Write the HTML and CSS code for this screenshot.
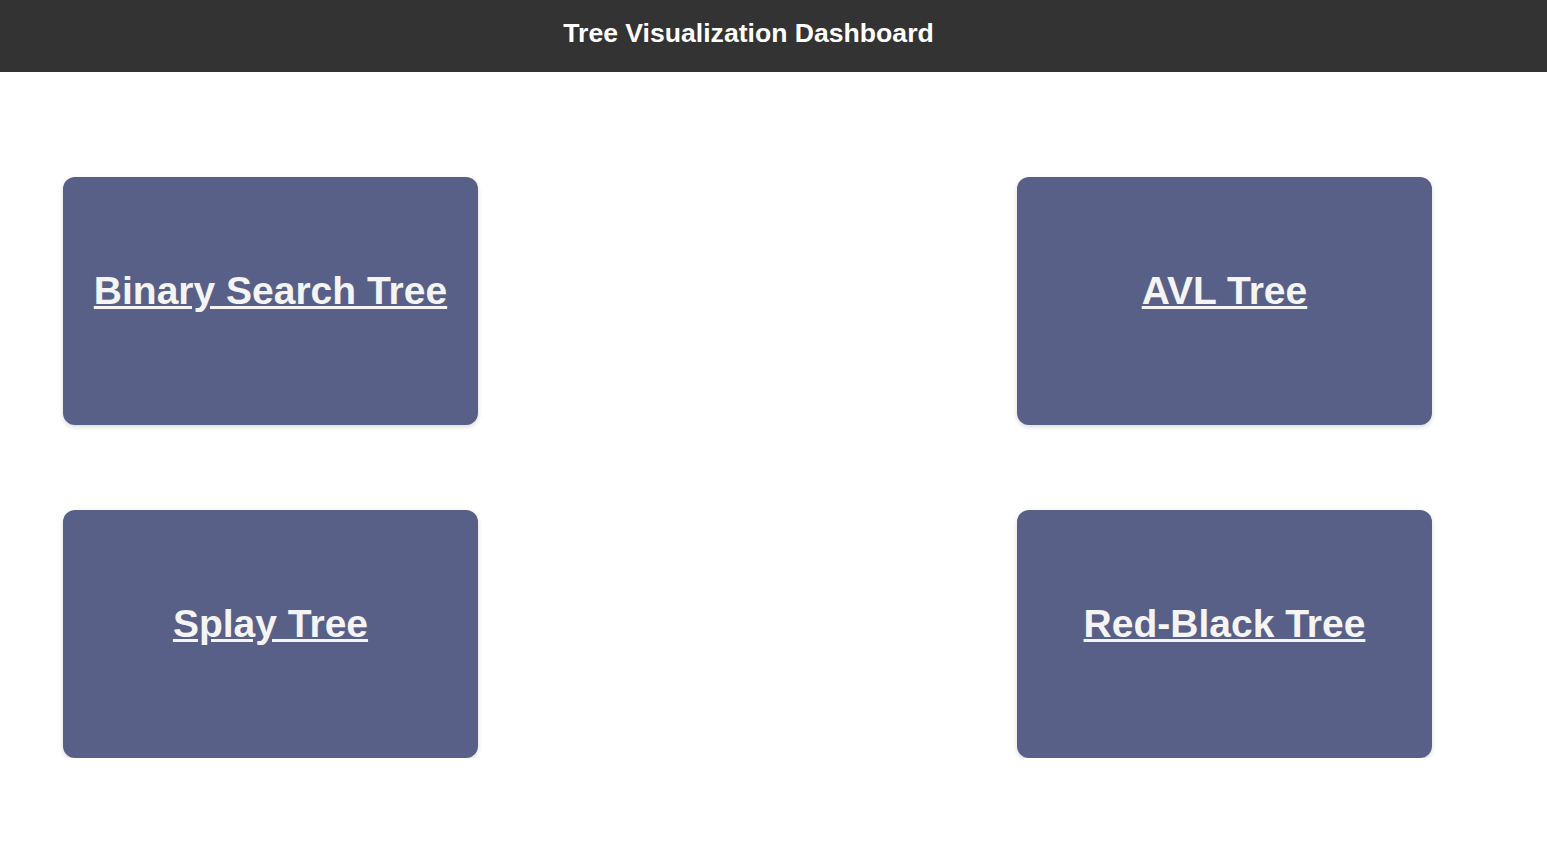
FILE: index.html
```html
<!DOCTYPE html>
<html>
<head>
<meta charset="utf-8">
<title>Tree Visualization Dashboard</title>
<link rel="stylesheet" href="styles.css">
</head>
<body>
<header class="topbar">
  <h1 class="title">Tree Visualization Dashboard</h1>
</header>
<main class="grid">
  <div class="row">
    <a class="card" href="#"><span class="card-label">Binary Search Tree</span></a>
    <a class="card" href="#"><span class="card-label">AVL Tree</span></a>
  </div>
  <div class="row">
    <a class="card" href="#"><span class="card-label">Splay Tree</span></a>
    <a class="card" href="#"><span class="card-label">Red-Black Tree</span></a>
  </div>
</main>
</body>
</html>
```
FILE: styles.css
```css
html, body {
  margin: 0;
  padding: 0;
  background: #ffffff;
  font-family: "Liberation Sans", Arial, sans-serif;
}
.topbar {
  background: #333333;
  height: 72px;
  box-sizing: border-box;
  display: flex;
  align-items: flex-start;
  justify-content: center;
  padding: 18px 50px 0 0;
}
.title {
  margin: 0;
  color: #ffffff;
  font-size: 26.6px;
  line-height: 31px;
  font-weight: bold;
}
.grid {
  width: 1495px;
  box-sizing: border-box;
  padding: 105px 63px 0 63px;
  display: flex;
  flex-direction: column;
  gap: 85px;
}
.row {
  display: flex;
  justify-content: space-between;
}
.card {
  width: 415px;
  height: 248px;
  box-sizing: border-box;
  padding-top: 91px;
  background: #586087;
  border-radius: 12px;
  box-shadow: 0 2px 5px rgba(0, 0, 0, 0.15);
  display: flex;
  justify-content: center;
  align-items: flex-start;
  color: #f4f4f4;
  text-decoration: none;
}
.card-label {
  font-size: 39px;
  font-weight: bold;
  text-decoration: underline;
  line-height: 45px;
}
```
